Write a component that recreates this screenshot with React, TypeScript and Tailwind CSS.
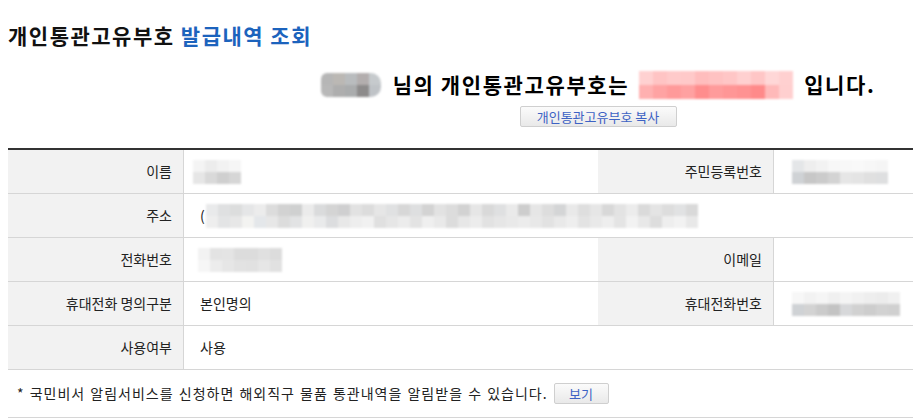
import React from "react";

// blurred / redacted value blocks drawn as small mosaics
type MosaicProps = {
  cells: string[][];
  cell: number;
  className?: string;
};

const Mosaic: React.FC<MosaicProps> = ({ cells, cell, className = "" }) => (
  <div className={`flex flex-col blur-[1px] ${className}`}>
    {cells.map((row, i) => (
      <div key={i} className="flex">
        {row.map((c, j) => (
          <div key={j} style={{ width: cell, height: cell, backgroundColor: c }} />
        ))}
      </div>
    ))}
  </div>
);

const nameCells = [
  ["#f4f4f4", "#ececec", "#f2f2f2", "#f6f6f6"],
  ["#e6e6e6", "#d9d9d9", "#cfcfcf", "#d6d6d6"],
];
const rrnCells = [
  ["#e4e6e8", "#eeeeee", "#f2f2f2", "#f7f7f7", "#f8f8f8", "#f9f9f9", "#f7f7f7", "#f5f5f5"],
  ["#cfd2d5", "#c7c7c7", "#cbcbcb", "#d3d3d3", "#e6e6e6", "#e4e4e4", "#e0e0e0", "#dedfe0"],
];
const addrCells = [
  ["#e9eaeb", "#dfe0e1", "#dcdddd", "#e5e6e7", "#ececec", "#dcdcdc", "#d2d2d2", "#cfd0d0", "#ebebeb", "#dadbdc", "#d4d4d4", "#cfcfd0", "#e2e2e2", "#dcdcdc", "#e6e6e6", "#e0e1e2", "#d7d7d7", "#dedfe0", "#d3d3d3", "#e2e2e2", "#dcdcdc", "#d2d2d2", "#e6e6e6", "#d9d9d9", "#dfe0e1", "#eaeaea", "#cdcdcd", "#e6e6e6", "#dddddd", "#d4d5d6", "#e9e9e9", "#dedede", "#e6e6e6", "#d8d8d8", "#e3e3e3", "#ececec", "#dadada", "#e4e4e4", "#dddddd", "#e1e2e3", "#d9d9d9"],
  ["#eeeeee", "#e3e4e5", "#e7e7e7", "#f3f3f1", "#e4e7ea", "#e7e7e7", "#dcdcdc", "#e2e3e4", "#f0f0ef", "#e9eaeb", "#dcdddf", "#e8e8e8", "#eeeeee", "#f1f1f1", "#e0e0e0", "#e6e6e6", "#ececec", "#e3e3e3", "#efefef", "#e9e9e9", "#dcdcdc", "#e7e7e7", "#ececec", "#e2e2e2", "#e6e6e6", "#e9e9e9", "#ececec", "#e8e8e8", "#e2e2e2", "#e9e9e9", "#eeeeee", "#e3e3e3", "#e9e9e9", "#eeeeee", "#e4e4e4", "#f2f2f2", "#e8e8e8", "#dddddd", "#eeeeee", "#f2f2f2", "#e8e8e8"],
];
const telCells = [
  ["#f2f2f2", "#e3e3e3", "#e4e4e4", "#dcdcdc", "#dcdcdc", "#e0e0e0", "#dcdcdc"],
  ["#f6f6f6", "#ececec", "#e6e6e6", "#e2e2e2", "#e1e1e1", "#e6e6e6", "#e1e1e1"],
];
const mobileCells = [
  ["#f7f7f7", "#f2f2f2", "#f5f5f5", "#f0f0f0", "#f4f4f4", "#f1f1f1", "#eeeeee", "#ececec", "#f0f0f0"],
  ["#cfd2d5", "#d3d3d3", "#cbcbcb", "#c3c3c3", "#d7d8da", "#d1d1d1", "#cdcdcd", "#d2d2d2", "#d0d0d0"],
];
const nickCells = [
  ["#b6b6b6", "#bbb8b4", "#b9bcbe", "#b3aeae", "#c6cacd"],
  ["#b8b8b8", "#aeaeae", "#aaacad", "#8d8b8b", "#bfc3c7"],
];
const codeCells = [
  ["#ffd1d1", "#ffc4c4", "#ffcaca", "#ffc9c9", "#ffbdbd", "#ffc2c2", "#ffc6c6", "#ffd0d0", "#ffc6c6", "#ffd7d7", "#ffd0d0"],
  ["#ffb0b0", "#ffa3a3", "#ff9a9a", "#ffa1a1", "#ff8d8d", "#ff9b9b", "#ff9696", "#ff9292", "#ff8a8a", "#ffb9b9", "#ffcfcf"],
];

const Label: React.FC<{ children: React.ReactNode }> = ({ children }) => (
  <div className="w-[176px] shrink-0 bg-[#f2f2f2] border-r border-[#d6d6d6] flex items-center justify-end pr-[11px] text-[14px] text-[#222]">
    {children}
  </div>
);

const Value: React.FC<{ children?: React.ReactNode; className?: string }> = ({ children, className = "" }) => (
  <div className={`w-[414px] shrink-0 flex items-center pl-4 text-[14px] text-[#222] ${className}`}>
    {children}
  </div>
);

const Row: React.FC<{ children: React.ReactNode }> = ({ children }) => (
  <div className="flex h-[44px] border-b border-[#d6d6d6]">{children}</div>
);

const SmallButton: React.FC<{ children: React.ReactNode; className?: string }> = ({ children, className = "" }) => (
  <button
    type="button"
    className={`h-[21px] rounded-[2px] border border-[#cfcfcf] bg-gradient-to-b from-[#fbfbfb] to-[#e9e9e9] text-[13px] leading-none text-[#3d62c4] ${className}`}
  >
    {children}
  </button>
);

export default function App() {
  return (
    <div
      className="w-[913px] h-[420px] overflow-hidden bg-white text-[#222]"
      style={{ fontFamily: '"Noto Sans CJK KR", "Noto Sans", sans-serif' }}
    >
      <div className="w-[1180px] ml-2">
        {/* Title */}
        <h1 className="mt-[21px] h-[28px] leading-[28px] text-[21px] font-bold tracking-[1.5px] text-[#111]">
          개인통관고유부호 <span className="text-[#1c63bd]">발급내역 조회</span>
        </h1>

        {/* Result line */}
        <div className="mt-[22px] flex items-center justify-center h-[28px] text-[21px] font-bold tracking-[1.6px] text-[#000]">
          <Mosaic cells={nickCells} cell={12} className="rounded-l-[6px] rounded-r-[10px] overflow-hidden" />
          <span className="ml-3">님의 개인통관고유부호는</span>
          <Mosaic cells={codeCells} cell={14} className="ml-[10px] overflow-hidden" />
          <span className="ml-[11px]">입니다.</span>
        </div>
        <div className="mt-[7px] flex justify-center">
          <SmallButton className="w-[157px]">개인통관고유부호 복사</SmallButton>
        </div>

        {/* Info table */}
        <div className="mt-[21px] border-t-2 border-[#333]">
          <Row>
            <Label>이름</Label>
            <Value>
              <Mosaic cells={nameCells} cell={12} className="ml-[-7px]" />
            </Value>
            <Label>주민등록번호</Label>
            <Value>
              <Mosaic cells={rrnCells} cell={12} className="ml-[2px]" />
            </Value>
          </Row>
          <Row>
            <Label>주소</Label>
            <div className="flex-1 flex items-center pl-4 text-[14px]">
              <span className="mr-[1px]">(</span>
              <Mosaic cells={addrCells} cell={12} />
            </div>
          </Row>
          <Row>
            <Label>전화번호</Label>
            <Value>
              <Mosaic cells={telCells} cell={12} className="ml-[-2px]" />
            </Value>
            <Label>이메일</Label>
            <Value />
          </Row>
          <Row>
            <Label>휴대전화 명의구분</Label>
            <Value>본인명의</Value>
            <Label>휴대전화번호</Label>
            <Value>
              <Mosaic cells={mobileCells} cell={12} className="ml-[2px]" />
            </Value>
          </Row>
          <Row>
            <Label>사용여부</Label>
            <Value>사용</Value>
          </Row>
        </div>

        {/* Notice */}
        <div className="h-[48px] flex items-center pl-[9px] border-b border-[#d6d6d6] text-[14px] text-[#222]">
          <span className="tracking-[1px] [word-spacing:1px]">
            * 국민비서 알림서비스를 신청하면 해외직구 물품 통관내역을 알림받을 수 있습니다.
          </span>
          <SmallButton className="ml-[6px] w-[55px]">보기</SmallButton>
        </div>
      </div>
    </div>
  );
}
